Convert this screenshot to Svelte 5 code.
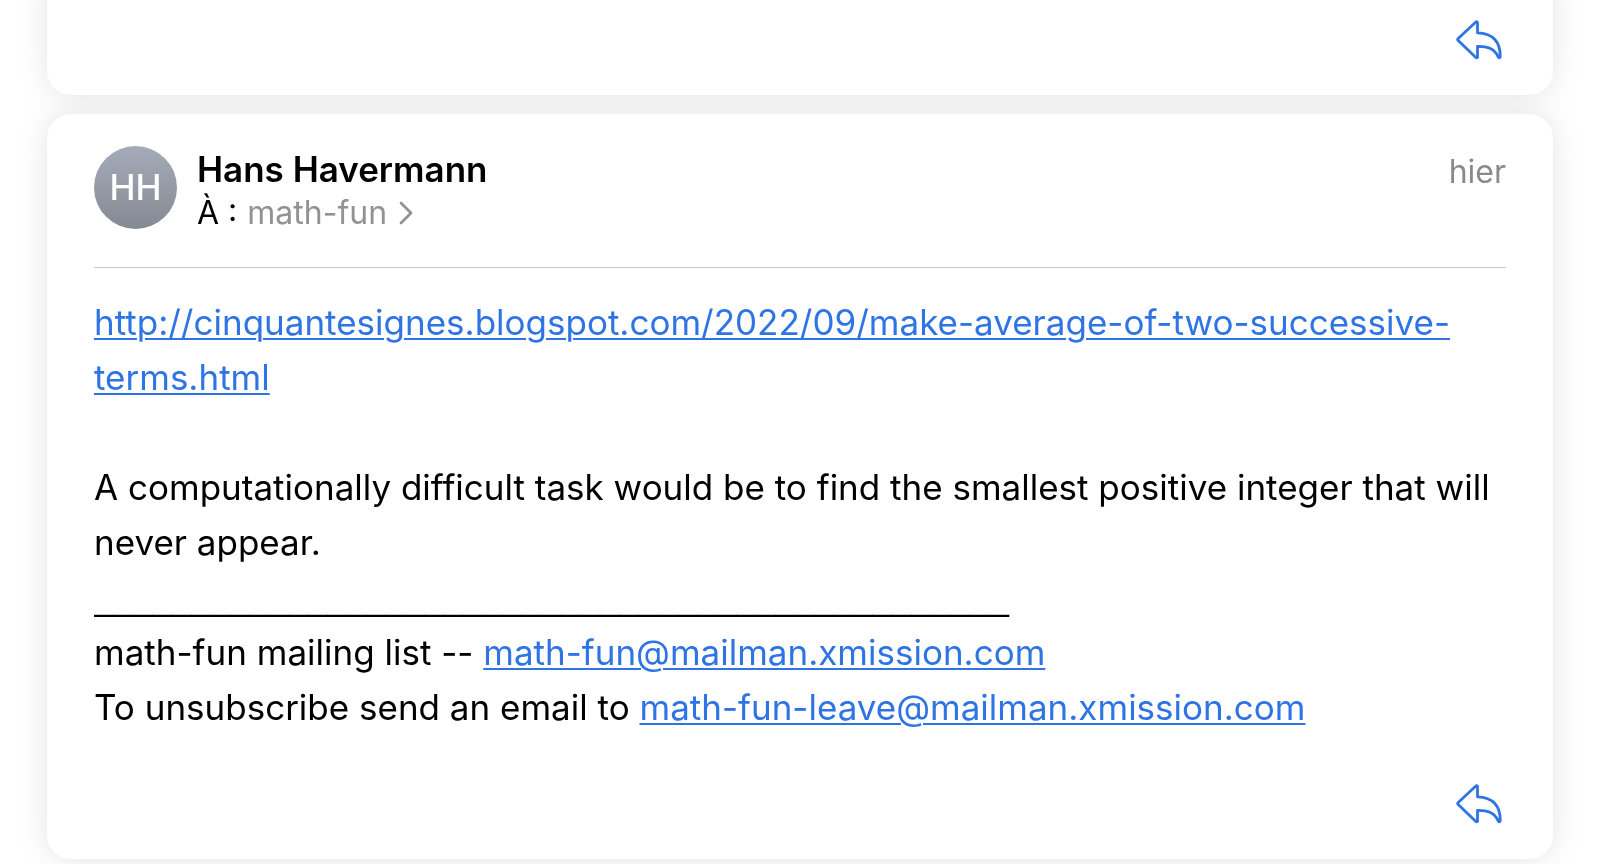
<script lang="ts">
	const message = {
		sender: 'Hans Havermann',
		initials: 'HH',
		list: 'math-fun',
		date: 'hier',
		url: 'http://cinquantesignes.blogspot.com/2022/09/make-average-of-two-successive-terms.html',
		text: 'A computationally difficult task would be to find the smallest positive integer that will never appear.',
		listAddress: 'math-fun@mailman.xmission.com',
		leaveAddress: 'math-fun-leave@mailman.xmission.com'
	};

	const separator = '_'.repeat(47);
</script>

{#snippet replyButton()}
	<button type="button" class="reply" aria-label="Répondre">
		<svg viewBox="0 0 46 40" aria-hidden="true">
			<path
				d="M21.5 2.2 Q20.6 1.4 19.6 2.3 L2.2 18.6 Q1.2 19.6 2.2 20.6 L19.6 37.3 Q20.6 38.2 21.5 37.4 V26.3 C32 26.2 38.4 28.6 42.2 36.8 Q43.2 38.6 44.2 37 C44.6 22.5 37.2 13 21.5 12.8 Z"
			/>
		</svg>
	</button>
{/snippet}

<main class="thread">
	<article class="card previous">
		<footer>{@render replyButton()}</footer>
	</article>

	<article class="card">
		<header>
			<div class="avatar">{message.initials}</div>
			<div class="people">
				<div class="sender">{message.sender}</div>
				<div class="recipient">
					<span>À :</span>
					<button type="button" class="list">
						{message.list}
						<svg viewBox="0 0 14 24" aria-hidden="true"><path d="M2 2 L12 12 L2 22" /></svg>
					</button>
				</div>
			</div>
			<time>{message.date}</time>
		</header>

		<div class="body">
			<p><a href={message.url}>{message.url}</a></p>
			<br />
			<p>{message.text}</p>
			<p class="separator">{separator}</p>
			<p>math-fun mailing list -- <a href="mailto:{message.listAddress}">{message.listAddress}</a></p>
			<p>
				To unsubscribe send an email to
				<a href="mailto:{message.leaveAddress}">{message.leaveAddress}</a>
			</p>
		</div>

		<footer>{@render replyButton()}</footer>
	</article>
</main>

<style>
	:global(body) {
		margin: 0;
		background: #fff;
	}
	.thread {
		display: grid;
		gap: 19px;
		padding: 0 47px 5px;
		color: #000;
		font-family: Inter, 'Liberation Sans', sans-serif;
		font-size: 35px;
		line-height: 55px;
		/* one shadow for the whole stack, so cards never shade each other */
		filter: drop-shadow(0 0 14px rgba(0, 0, 0, 0.11));
	}
	.card {
		padding: 32px 47px 35px;
		border-radius: 24px;
		background: #fff;
	}
	/* scrolled partly out of view */
	.previous {
		margin-top: -40px;
		padding-top: 60px;
	}
	header {
		display: flex;
		align-items: flex-start;
		gap: 20px;
		padding-bottom: 32px;
		border-bottom: 1px solid #c8c8ca;
	}
	.avatar {
		display: grid;
		place-items: center;
		width: 83px;
		height: 83px;
		border-radius: 50%;
		background: linear-gradient(#a5abb9, #858992);
		color: #fff;
		font-weight: 500;
	}
	.people {
		flex: 1;
		padding-top: 1px;
		line-height: 44px;
	}
	.sender {
		font-weight: 600;
	}
	.recipient {
		display: flex;
		gap: 10px;
		font-size: 32px;
	}
	.list {
		display: flex;
		align-items: center;
		gap: 12px;
		color: #929294;
	}
	.list svg {
		width: 14px;
		height: 24px;
		stroke-width: 2.8;
	}
	time {
		color: #8a8a8c;
		font-size: 32px;
		line-height: 52px;
	}
	.body {
		padding: 27px 0 49px;
	}
	p {
		margin: 0;
	}
	.separator {
		overflow: hidden;
		font-family: 'Liberation Sans', sans-serif;
		white-space: nowrap;
	}
	a {
		color: #2f74e5;
		text-decoration-thickness: 2px;
		text-underline-offset: 3px;
	}
	footer {
		display: flex;
		justify-content: flex-end;
		padding-right: 4px;
	}
	button {
		padding: 0;
		border: 0;
		background: none;
		font: inherit;
		cursor: pointer;
	}
	.reply {
		color: #2f74e5;
	}
	.reply svg {
		display: block;
		width: 46px;
		height: 40px;
		stroke-width: 2.8;
	}
	svg {
		fill: none;
		stroke: currentColor;
		stroke-linecap: round;
		stroke-linejoin: round;
	}
</style>
